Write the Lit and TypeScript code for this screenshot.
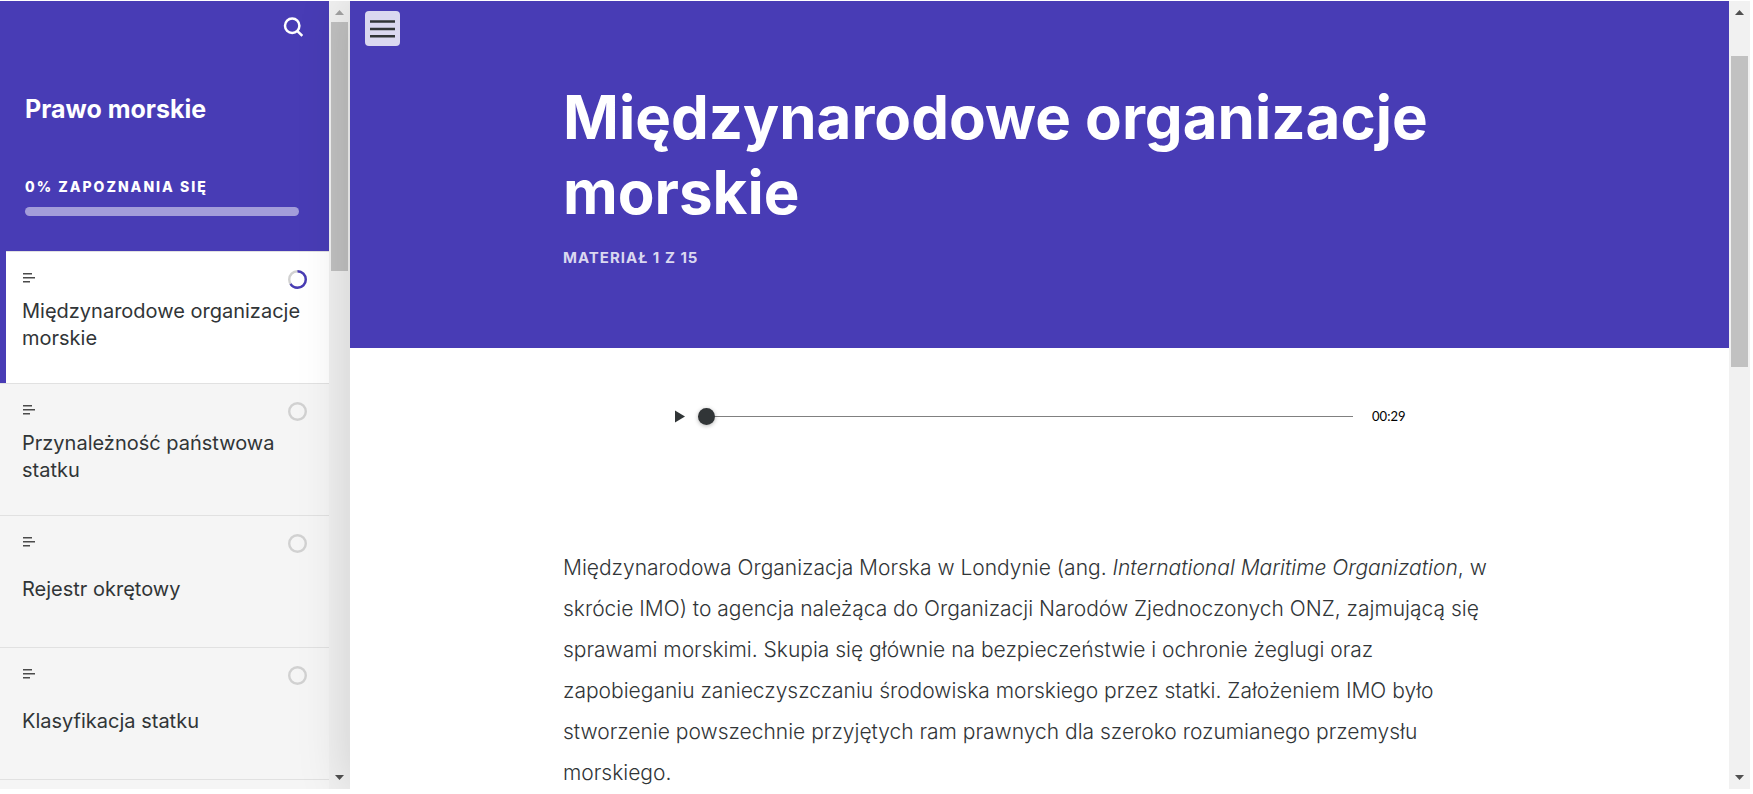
import { LitElement, html, svg, css, nothing } from "lit";
import { customElement, property } from "lit/decorators.js";

interface Lesson {
  title: string;
  progress: number;
}

const lessons: Lesson[] = [
  { title: "Międzynarodowe organizacje morskie", progress: 66 },
  { title: "Przynależność państwowa statku", progress: 0 },
  { title: "Rejestr okrętowy", progress: 0 },
  { title: "Klasyfikacja statku", progress: 0 },
];

/** Vertical scroll track with arrow heads and a thumb; start and size are per mille of the rail. */
@customElement("scroll-track")
export class ScrollTrack extends LitElement {
  @property({ type: Number }) start = 0;
  @property({ type: Number }) size = 300;
  @property({ type: Boolean, attribute: "at-top" }) atTop = false;

  static styles = css`
    :host {
      display: flex;
      flex-direction: column;
      width: 21px;
      flex: none;
      background: #f1f1f1;
    }
    .arrow {
      display: block;
      width: 21px;
      height: 21px;
      flex: none;
      fill: #505050;
    }
    .dim {
      fill: #a3a3a3;
    }
    .rail {
      flex: 1;
      display: flex;
      flex-direction: column;
      padding: 0 2px;
    }
    .thumb {
      background: #c1c1c1;
    }
  `;

  render() {
    return html`
      <svg class="arrow ${this.atTop ? "dim" : ""}" viewBox="0 0 21 21" aria-hidden="true">
        <path d="M6 14 L10.5 9 L15 14Z" />
      </svg>
      <div class="rail">
        <div style="flex: ${this.start} 0 0"></div>
        <div class="thumb" style="flex: ${this.size} 0 0"></div>
        <div style="flex: ${1000 - this.start - this.size} 0 0"></div>
      </div>
      <svg class="arrow" viewBox="0 0 21 21" aria-hidden="true">
        <path d="M6 7 L15 7 L10.5 12Z" />
      </svg>
    `;
  }
}

@customElement("course-sidebar")
export class CourseSidebar extends LitElement {
  static styles = css`
    :host {
      display: flex;
      width: 350px;
      flex: none;
      overflow: hidden;
      background: #f5f5f5;
      font-family: Inter, sans-serif;
    }
    .scroll {
      flex: 1;
      min-width: 0;
      overflow: hidden;
    }
    .head {
      box-sizing: border-box;
      height: 250px;
      padding: 10px 30px 35px 25px;
      background: #483cb5;
      color: #fff;
      display: flex;
      flex-direction: column;
    }
    .search {
      align-self: flex-end;
      width: 32px;
      height: 32px;
      padding: 0;
      border: 0;
      margin-right: -10px;
      background: none;
      display: grid;
      place-items: center;
    }
    .search svg {
      fill: none;
      stroke: #fff;
      stroke-width: 2.5;
    }
    .course {
      margin: 50px 0 0;
      font-size: 25px;
      line-height: 32px;
      font-weight: 700;
    }
    .label {
      margin-top: auto;
      font-size: 14px;
      line-height: 20px;
      font-weight: 800;
      letter-spacing: 2px;
      text-transform: uppercase;
    }
    .bar {
      height: 9px;
      margin-top: 10px;
      border-radius: 5px;
      background: #a39dda;
    }
    ol {
      list-style: none;
      margin: 0;
      padding: 0;
      border-bottom: 1px solid #e1e1e1;
    }
    li {
      min-height: 132px;
      display: flex;
    }
    .active {
      background: #fff;
      border-left: 6px solid #483cb5;
    }
    a {
      flex: 1;
      padding: 18px 22px 31px;
      border-top: 1px solid #e1e1e1;
      display: flex;
      flex-direction: column;
      color: #313537;
      text-decoration: none;
      font-size: 20px;
      line-height: 27px;
    }
    .active a {
      padding-left: 16px;
    }
    .icons {
      display: flex;
      justify-content: space-between;
      height: 19px;
    }
    .icons svg {
      display: block;
    }
    .title {
      flex: 1;
      display: flex;
      align-items: center;
      margin-top: 9px;
    }
    .track {
      fill: none;
      stroke: #d1d1d1;
      stroke-width: 2.4;
    }
    .done {
      fill: none;
      stroke: #483cb5;
      stroke-width: 2.4;
    }
  `;

  private ring(progress: number) {
    return html`<svg width="19" height="19" viewBox="0 0 19 19" aria-hidden="true">
      <circle class="track" cx="9.5" cy="9.5" r="8.3" />
      ${progress
        ? svg`<circle class="done" cx="9.5" cy="9.5" r="8.3" pathLength="100"
            stroke-dasharray="${progress} 100" transform="rotate(-90 9.5 9.5)" />`
        : nothing}
    </svg>`;
  }

  render() {
    return html`
      <nav class="scroll" aria-label="Spis treści">
        <header class="head">
          <button class="search" aria-label="Szukaj">
            <svg width="20" height="20" viewBox="0 0 20 20">
              <circle cx="9.2" cy="8.8" r="7.2" />
              <path d="M14.2 13.8 L19.3 18.9" />
            </svg>
          </button>
          <h2 class="course">Prawo morskie</h2>
          <div class="label">0% zapoznania się</div>
          <div class="bar"></div>
        </header>
        <ol>
          ${lessons.map(
            (lesson, i) => html`<li class=${i === 0 ? "active" : ""}>
              <a href="#">
                <span class="icons">
                  <svg width="13" height="19" viewBox="0 0 13 19" aria-hidden="true">
                    <path
                      d="M1 3.7 H10 M1 7.7 H13 M1 11.7 H8"
                      stroke="#4b4b4b"
                      stroke-width="1.6"
                    />
                  </svg>
                  ${this.ring(lesson.progress)}
                </span>
                <span class="title">${lesson.title}</span>
              </a>
            </li>`
          )}
        </ol>
      </nav>
      <scroll-track at-top start="0" size="334"></scroll-track>
    `;
  }
}

@customElement("audio-strip")
export class AudioStrip extends LitElement {
  static styles = css`
    :host {
      display: flex;
      align-items: center;
      max-width: 732px;
      margin: 0 auto;
      font-family: Lato, sans-serif;
    }
    button {
      width: 12px;
      height: 20px;
      padding: 0;
      border: 0;
      margin-right: 12px;
      background: none;
    }
    button svg {
      display: block;
      fill: #313537;
    }
    input {
      appearance: none;
      flex: 1;
      min-width: 0;
      height: 17px;
      margin: 0 19px 0 0;
      background: none;
    }
    input::-webkit-slider-runnable-track {
      height: 1px;
      background: #808080;
    }
    input::-webkit-slider-thumb {
      appearance: none;
      width: 17px;
      height: 17px;
      margin-top: -8px;
      border-radius: 50%;
      background: #313537;
      box-shadow: 0 1px 4px rgba(0, 0, 0, 0.3);
    }
    time {
      font-size: 13px;
      line-height: 20px;
      color: #000;
    }
  `;

  render() {
    return html`
      <button aria-label="Odtwórz">
        <svg width="12" height="20" viewBox="0 0 12 20"><path d="M1 4.5 L11 10.5 L1 16.5Z" /></svg>
      </button>
      <input type="range" min="0" max="29" value="0" aria-label="Pozycja nagrania" />
      <time>00:29</time>
    `;
  }
}

@customElement("app-root")
export class AppRoot extends LitElement {
  static styles = css`
    :host {
      display: block;
      box-sizing: border-box;
      height: 100vh;
      padding: 1px 3px 5px 0;
      background: #fff;
      font-family: Inter, sans-serif;
    }
    .shell {
      display: flex;
      height: 100%;
      overflow: hidden;
    }
    .pane {
      flex: 1;
      min-width: 0;
      display: flex;
      position: relative;
      z-index: 1;
      background: #fff;
      box-shadow: 0 0 50px rgba(0, 0, 0, 0.15);
    }
    main {
      flex: 1;
      min-width: 0;
      overflow: hidden;
    }
    .hero {
      padding: 10px 15px 80px;
      background: #483cb5;
      color: #fff;
    }
    .menu {
      display: grid;
      place-items: center;
      width: 35px;
      height: 35px;
      padding: 0;
      border: 0;
      border-radius: 4px;
      background: #dad8f0;
    }
    .column {
      max-width: 953px;
      margin: 0 auto;
    }
    h1 {
      margin: 34px 0 0;
      font-size: 60px;
      line-height: 75px;
      font-weight: 700;
    }
    .count {
      margin: 18px 0 0;
      font-size: 15px;
      line-height: 20px;
      font-weight: 700;
      letter-spacing: 1px;
      color: #dad8f0;
      text-transform: uppercase;
    }
    .body {
      padding: 58px 15px 0;
    }
    .text {
      max-width: 940px;
      margin: 121px 0 0;
      font-size: 21px;
      line-height: 41px;
      font-weight: 300;
      color: #313537;
    }
  `;

  render() {
    return html`
      <div class="shell">
        <course-sidebar></course-sidebar>
        <div class="pane">
          <main>
            <header class="hero">
              <button class="menu" aria-label="Menu">
                <svg width="25" height="20" viewBox="0 0 25 20">
                  <path d="M0 2.5 H25 M0 10 H25 M0 17.2 H25" stroke="#313537" stroke-width="2.5" />
                </svg>
              </button>
              <div class="column">
                <h1>Międzynarodowe organizacje morskie</h1>
                <p class="count">Materiał 1 z 15</p>
              </div>
            </header>
            <div class="body">
              <audio-strip></audio-strip>
              <div class="column">
                <p class="text">
                  Międzynarodowa Organizacja Morska w Londynie (ang.
                  <em>International Maritime Organization</em>, w skrócie IMO) to agencja należąca
                  do Organizacji Narodów Zjednoczonych ONZ, zajmującą się sprawami morskimi. Skupia
                  się głównie na bezpieczeństwie i ochronie żeglugi oraz zapobieganiu
                  zanieczyszczaniu środowiska morskiego przez statki. Założeniem IMO było stworzenie
                  powszechnie przyjętych ram prawnych dla szeroko rozumianego przemysłu morskiego.
                </p>
              </div>
            </div>
          </main>
          <scroll-track start="46" size="417"></scroll-track>
        </div>
      </div>
    `;
  }
}
